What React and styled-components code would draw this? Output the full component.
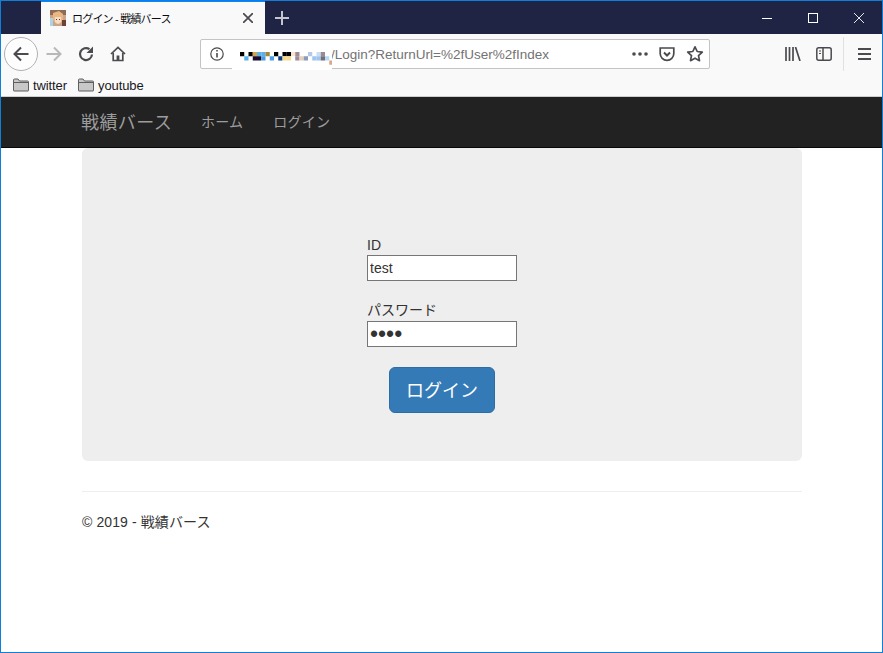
import React from 'react';
import styled, { createGlobalStyle } from 'styled-components';

const GlobalStyle = createGlobalStyle`
  html, body { margin: 0; padding: 0; background: #fff; }
  * { box-sizing: border-box; }
  body { font-family: "Liberation Sans", "Noto Sans CJK JP", Arial, sans-serif; color: #333; overflow: hidden; }
`;

const Frame = styled.div`
  width: 883px;
  height: 653px;
  border: 1px solid #0f7fdc;
  display: flex;
  flex-direction: column;
  background: #fff;
  overflow: hidden;
`;

const TitleBar = styled.div`
  height: 33px;
  flex: none;
  background: #1f2444;
  display: flex;
  padding-left: 40px;
`;

const Tab = styled.div`
  width: 224px;
  background: #f9f9fa;
  border-top: 1px solid #0a84ff;
  display: flex;
  align-items: center;
  padding: 0 12px 0 9px;
  gap: 6px;
  font-size: 11px;
  letter-spacing: -0.8px;
  color: #0c0c0d;
`;

const TabTitle = styled.span`
  flex: 1;
  white-space: nowrap;
`;

const NewTab = styled.div`
  width: 34px;
  display: flex;
  align-items: center;
  justify-content: center;
`;

const WinControls = styled.div`
  margin-left: auto;
  display: flex;
  align-items: center;
`;

const WinButton = styled.div`
  width: 46px;
  display: flex;
  align-items: center;
  justify-content: center;
  height: 100%;
`;

const Toolbar = styled.div`
  height: 41px;
  flex: none;
  background: #f9f9fa;
  display: flex;
  align-items: center;
  padding: 0 0 1px 3px;
`;

const BackCircle = styled.div`
  width: 34px;
  height: 34px;
  border-radius: 50%;
  border: 1px solid #b1b1b3;
  background: #fdfdfd;
  display: flex;
  align-items: center;
  justify-content: center;
  flex: none;
`;

const ToolIcon = styled.div`
  width: ${p => p.$w || 32}px;
  height: 32px;
  flex: none;
  display: flex;
  align-items: center;
  justify-content: center;
`;

const UrlBar = styled.div`
  width: 510px;
  height: 30px;
  margin: 0 67px 0 66px;
  background: #fff;
  border: 1px solid #c4c4c6;
  border-radius: 2px;
  display: flex;
  align-items: center;
  flex: none;
  position: relative;
`;

const InfoSlot = styled.div`
  width: 32px;
  display: flex;
  justify-content: center;
  flex: none;
`;

const Mosaic = styled.svg`
  position: absolute;
  left: 31px;
  top: 6px;
`;

const UrlText = styled.span`
  font-size: 13.5px;
  color: #737373;
  white-space: nowrap;
  flex: 1;
  padding-left: 98px;
`;

const UrlIcons = styled.div`
  display: flex;
  align-items: center;
  gap: 11px;
  padding-right: 5px;
`;

const Divider = styled.div`
  width: 1px;
  height: 34px;
  background: #e1e1e2;
  margin: 0 4px;
  flex: none;
`;

const Bookmarks = styled.div`
  height: 21px;
  flex: none;
  background: #f9f9fa;
  display: flex;
  align-items: center;
  padding: 0 0 1px 12px;
  gap: 11px;
`;

const Bookmark = styled.div`
  display: flex;
  align-items: center;
  gap: 4px;
  font-size: 13px;
  letter-spacing: -0.1px;
  color: #18181a;
`;

const ToolbarEdge = styled.div`
  height: 1px;
  flex: none;
  background: #cfcfd1;
`;

const Navbar = styled.nav`
  height: 51px;
  flex: none;
  background: #222;
  border-bottom: 1px solid #080808;
  display: flex;
  align-items: center;
  padding: 0 0 3px 80px;
`;

const Brand = styled.span`
  font-size: 18px;
  letter-spacing: 0.4px;
  color: #9d9d9d;
  margin-right: 29px;
  white-space: nowrap;
`;

const NavLink = styled.span`
  font-size: 14px;
  letter-spacing: 0.2px;
  color: #9d9d9d;
  margin-right: 30px;
  white-space: nowrap;
`;

const Container = styled.main`
  width: 720px;
  margin-left: 81px;
`;

const Jumbotron = styled.section`
  height: 313px;
  background: #eee;
  border-radius: 6px;
  display: flex;
  flex-direction: column;
  align-items: center;
  padding-top: 89px;
`;

const FormGroup = styled.div`
  width: 150px;
  margin-bottom: 15px;
`;

const Label = styled.label`
  display: block;
  color: #333;
  font-size: 14px;
  height: ${p => p.$h}px;
  line-height: ${p => p.$lh}px;
  white-space: nowrap;
`;

const Field = styled.input`
  display: block;
  width: 150px;
  height: 26px;
  border: 1px solid #767676;
  background: #fff;
  padding: 0 2px;
  font-family: inherit;
  font-size: 14px;
  color: #333;
  outline: none;
  border-radius: 0;
`;

const PasswordField = styled(Field)`
  font-size: 23px;
`;

const SubmitButton = styled.button`
  width: 106px;
  height: 46px;
  margin-top: 5px;
  background: #337ab7;
  border: 1px solid #2e6da4;
  border-radius: 6px;
  color: #fff;
  font-family: inherit;
  font-size: 18px;
  padding: 0 0 2px;
`;

const Rule = styled.hr`
  border: 0;
  border-top: 1px solid #eee;
  margin: 30px 0 20px;
`;

const Footer = styled.footer`
  font-size: 14px;
  line-height: 20px;
  letter-spacing: 0.1px;
  color: #333;
`;

const Favicon = () => (
  <svg width="16" height="16" viewBox="0 0 16 16" style={{ flex: 'none' }}>
    <rect width="16" height="16" fill="#c9a48a" />
    <rect x="0" y="0" width="16" height="5" fill="#8f6a55" />
    <path d="M3 3 L9 1 L13 4 L13 10 L10 14 L6 14 L3 10 Z" fill="#e9b77f" />
    <path d="M5 7 L11 7 L11 12 L8 14 L5 12 Z" fill="#f6dcc8" />
    <rect x="0" y="8" width="3" height="8" fill="#a9d3e6" />
    <rect x="12" y="10" width="4" height="6" fill="#6a4436" />
    <rect x="6" y="9" width="1" height="1" fill="#5a3a30" />
    <rect x="9" y="9" width="1" height="1" fill="#5a3a30" />
  </svg>
);

const mosaicCells = [
  [0, 0, '#000'], [1, 1, '#5ab0ea'], [2, 0, '#000'], [3, 0, '#d3a24e'], [3, 1, '#1b0a2e'], [4, 0, '#5ab0ea'], [4, 1, '#1b0a2e'],
  [5, 0, '#5ab0ea'], [5, 1, '#4a9ae0'], [6, 0, '#a08838'], [7, 1, '#4aa0e8'], [8, 0, '#000'], [9, 1, '#0c3c86'], [10, 0, '#000'],
  [11, 0, '#000'], [10, 1, '#f6d98a'], [11, 1, '#f6d98a'], [12, 0, '#f5e6d0'], [13, 0, '#a08a96'], [13, 1, '#a08a96'], [14, 1, '#e6d0b8'],
  [15, 1, '#8a9ab8'], [16, 0, '#b8c8e6'], [17, 1, '#a0c4ee'], [18, 0, '#c8def4'], [18, 1, '#a0c4ee'], [19, 0, '#9a8a9a'], [19, 1, '#707078'],
  [20, 1, '#b8d8f4'], [21, 2, '#d8a888'],
];

const UrlMosaic = () => (
  <Mosaic width="100" height="24" viewBox="0 0 100 24">
    <rect width="100" height="24" fill="#fff" />
    {mosaicCells.map(([x, y, c], i) => (
      <rect key={i} x={8 + x * 4.25} y={6 + y * 4.25} width="4.25" height="4.25" fill={c} />
    ))}
  </Mosaic>
);

const Folder = () => (
  <svg width="16" height="14" viewBox="0 0 16 14">
    <path d="M.5 12.5 V2 a1 1 0 0 1 1-1 H5 l1.5 2 H14.5 a1 1 0 0 1 1 1 V12.5 a.5.5 0 0 1-.5.5 H1 a.5.5 0 0 1-.5-.5Z" fill="#c8c8c8" stroke="#5f5f60" />
    <path d="M.5 4.5 H15.5" stroke="#5f5f60" />
  </svg>
);

const icon = { fill: 'none', stroke: '#4a4a4f', strokeWidth: 2 };

export default function App() {
  return (
    <>
      <GlobalStyle />
      <Frame>
        <TitleBar>
          <Tab>
            <Favicon />
            <TabTitle>ログイン - 戦績バース</TabTitle>
            <svg width="10" height="10" viewBox="0 0 10 10"><path d="M0 0 L10 10 M10 0 L0 10" stroke="#4a4a4f" strokeWidth="1.7" /></svg>
          </Tab>
          <NewTab>
            <svg width="14" height="14" viewBox="0 0 14 14"><path d="M7 0 V14 M0 7 H14" stroke="#c4c5cf" strokeWidth="2" /></svg>
          </NewTab>
          <WinControls>
            <WinButton><svg width="10" height="10" viewBox="0 0 10 10"><path d="M0 5.5 H10" stroke="#fff" /></svg></WinButton>
            <WinButton><svg width="10" height="10" viewBox="0 0 10 10"><rect x=".5" y=".5" width="9" height="9" fill="none" stroke="#fff" /></svg></WinButton>
            <WinButton><svg width="10" height="10" viewBox="0 0 10 10"><path d="M0 0 L10 10 M10 0 L0 10" stroke="#fff" strokeWidth=".9" /></svg></WinButton>
          </WinControls>
        </TitleBar>

        <Toolbar>
          <BackCircle>
            <svg width="16" height="16" viewBox="0 0 16 16" {...icon}><path d="M15.5 8 H1.5 M8 1.5 L1.5 8 L8 14.5" /></svg>
          </BackCircle>
          <ToolIcon>
            <svg width="16" height="16" viewBox="0 0 16 16" fill="none" stroke="#b8b8ba" strokeWidth="2"><path d="M.5 8 H14.5 M8 1.5 L14.5 8 L8 14.5" /></svg>
          </ToolIcon>
          <ToolIcon>
            <svg width="16" height="16" viewBox="0 0 16 16" {...icon}><path d="M14 8.5 A6 6 0 1 1 11.5 3.2" strokeWidth="2.2" /><path d="M15 .5 V7 H8.5 Z" fill="#4a4a4f" stroke="none" /></svg>
          </ToolIcon>
          <ToolIcon>
            <svg width="16" height="16" viewBox="0 0 16 16" fill="none" stroke="#4a4a4f" strokeWidth="1.7"><path d="M1 8 L8 1.5 L15 8" /><path d="M3.2 7 V14.5 H12.8 V7" /><rect x="6.6" y="9.5" width="2.8" height="5" fill="#4a4a4f" stroke="none" /></svg>
          </ToolIcon>
          <UrlBar>
            <InfoSlot>
              <svg width="14" height="14" viewBox="0 0 14 14" fill="none" stroke="#4a4a4f"><circle cx="7" cy="7" r="6.2" strokeWidth="1.2" /><path d="M7 6 V10.5" strokeWidth="1.6" /><path d="M7 3 V4.6" strokeWidth="1.6" /></svg>
            </InfoSlot>
            <UrlText>/Login?ReturnUrl=%2fUser%2fIndex</UrlText>
            <UrlIcons>
              <svg width="16" height="4" viewBox="0 0 16 4" fill="#4a4a4f"><circle cx="2" cy="2" r="1.8" /><circle cx="8" cy="2" r="1.8" /><circle cx="14" cy="2" r="1.8" /></svg>
              <svg width="16" height="16" viewBox="0 0 16 16" fill="none" stroke="#4a4a4f" strokeWidth="1.7"><path d="M1.2 2 H14.8 V7.5 A6.8 6.8 0 0 1 1.2 7.5 Z" /><path d="M5 6.5 L8 9.5 L11 6.5" strokeWidth="2" /></svg>
              <svg width="18" height="18" viewBox="0 0 18 18" fill="none" stroke="#4a4a4f" strokeWidth="1.7"><path d="M9 1.8 L11.2 6.5 L16.3 7.1 L12.5 10.6 L13.5 15.7 L9 13.2 L4.5 15.7 L5.5 10.6 L1.7 7.1 L6.8 6.5 Z" strokeLinejoin="round" /></svg>
            </UrlIcons>
            <UrlMosaic />
          </UrlBar>
          <ToolIcon>
            <svg width="16" height="14" viewBox="0 0 16 14" stroke="#4a4a4f" strokeWidth="1.7" fill="none"><path d="M1 0 V14 M4.5 0 V14 M8 0 V14 M10.5 0 L15 14" /></svg>
          </ToolIcon>
          <ToolIcon $w={30}>
            <svg width="16" height="14" viewBox="0 0 16 14" fill="none" stroke="#4a4a4f" strokeWidth="1.5"><rect x=".8" y=".8" width="14.4" height="12.4" rx="2" /><path d="M7 1 V13" /><path d="M3 4 H5 M3 6.5 H5" strokeWidth="1" /></svg>
          </ToolIcon>
          <Divider />
          <ToolIcon>
            <svg width="13" height="12" viewBox="0 0 13 12" stroke="#4a4a4f" strokeWidth="2"><path d="M0 1 H13 M0 6 H13 M0 11 H13" /></svg>
          </ToolIcon>
        </Toolbar>

        <Bookmarks>
          <Bookmark><Folder />twitter</Bookmark>
          <Bookmark><Folder />youtube</Bookmark>
        </Bookmarks>
        <ToolbarEdge />

        <Navbar>
          <Brand>戦績バース</Brand>
          <NavLink>ホーム</NavLink>
          <NavLink>ログイン</NavLink>
        </Navbar>

        <Container>
          <Jumbotron>
            <FormGroup>
              <Label $h={18} $lh={16}>ID</Label>
              <Field defaultValue="test" />
            </FormGroup>
            <FormGroup>
              <Label $h={25} $lh={29}>パスワード</Label>
              <PasswordField type="password" defaultValue="test" />
            </FormGroup>
            <SubmitButton>ログイン</SubmitButton>
          </Jumbotron>
          <Rule />
          <Footer>© 2019 - 戦績バース</Footer>
        </Container>
      </Frame>
    </>
  );
}
